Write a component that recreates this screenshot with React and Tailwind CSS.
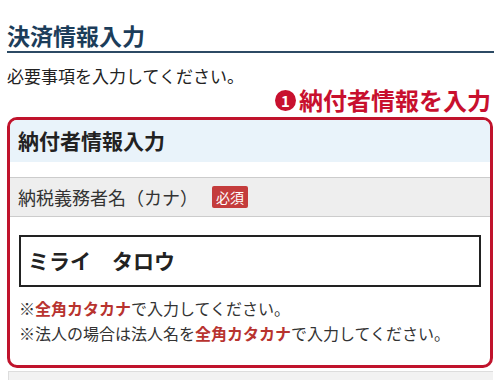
export default function App() {
  const jp = { fontFamily: '"Noto Sans CJK JP", "Noto Sans", sans-serif' };

  return (
    <div className="w-[501px] h-[380px] overflow-hidden bg-white text-[#222]" style={jp}>
      <div className="px-[7px] pt-[19px]">
        {/* page heading */}
        <h2 className="text-[23px] leading-[32px] font-bold text-[#1c3d5a] border-b-2 border-[#2c4a64]">
          決済情報入力
        </h2>
        <p className="mt-[12px] text-[17px] leading-[22px]">必要事項を入力してください。</p>

        {/* annotation */}
        <div className="-mt-px flex items-center justify-end pr-[3px] text-[24px] leading-[28px] font-bold text-[#c8102e]">
          <span className="mr-[3px] flex h-[21px] w-[21px] items-center justify-center rounded-full bg-[#c8102e] text-[15px] leading-none text-white">
            1
          </span>
          納付者情報を入力
        </div>

        {/* payer section */}
        <div className="mt-[3px] mr-px overflow-hidden rounded-[10px] border-[3px] border-[#c0132c]">
          <div className="flex h-[42px] items-center bg-[#e9f3fa] px-[8px] text-[21px] font-bold">
            納付者情報入力
          </div>
          <div className="h-[15px]"></div>
          <div className="flex h-[40px] items-center border-y border-[#cccccc] bg-[#eeeeee] px-[8px]">
            <span className="text-[18px] text-[#333]">納税義務者名（カナ）</span>
            <span className="ml-[14px] flex h-[22px] w-[36px] items-center justify-center rounded-[2px] bg-[#c43c3c] text-[14px] text-white">
              必須
            </span>
          </div>
          <div className="px-[9px] pt-[18px] pb-[19px]">
            <div className="flex h-[52px] items-center border-2 border-[#222] px-[7px] text-[21px] font-bold">
              ミライ　タロウ
            </div>
            <div className="mt-[9px] text-[16px] leading-[25px] text-[#333]">
              <p>
                ※<span className="font-bold text-[#b8332f]">全角カタカナ</span>で入力してください。
              </p>
              <p>
                ※法人の場合は法人名を<span className="font-bold text-[#b8332f]">全角カタカナ</span>で入力してください。
              </p>
            </div>
          </div>
        </div>

        {/* next section peeking */}
        <div className="mt-[3px] ml-px mr-px h-[20px] border-t border-l border-[#dddddd] bg-[#f2f2f2]"></div>
      </div>
    </div>
  );
}
